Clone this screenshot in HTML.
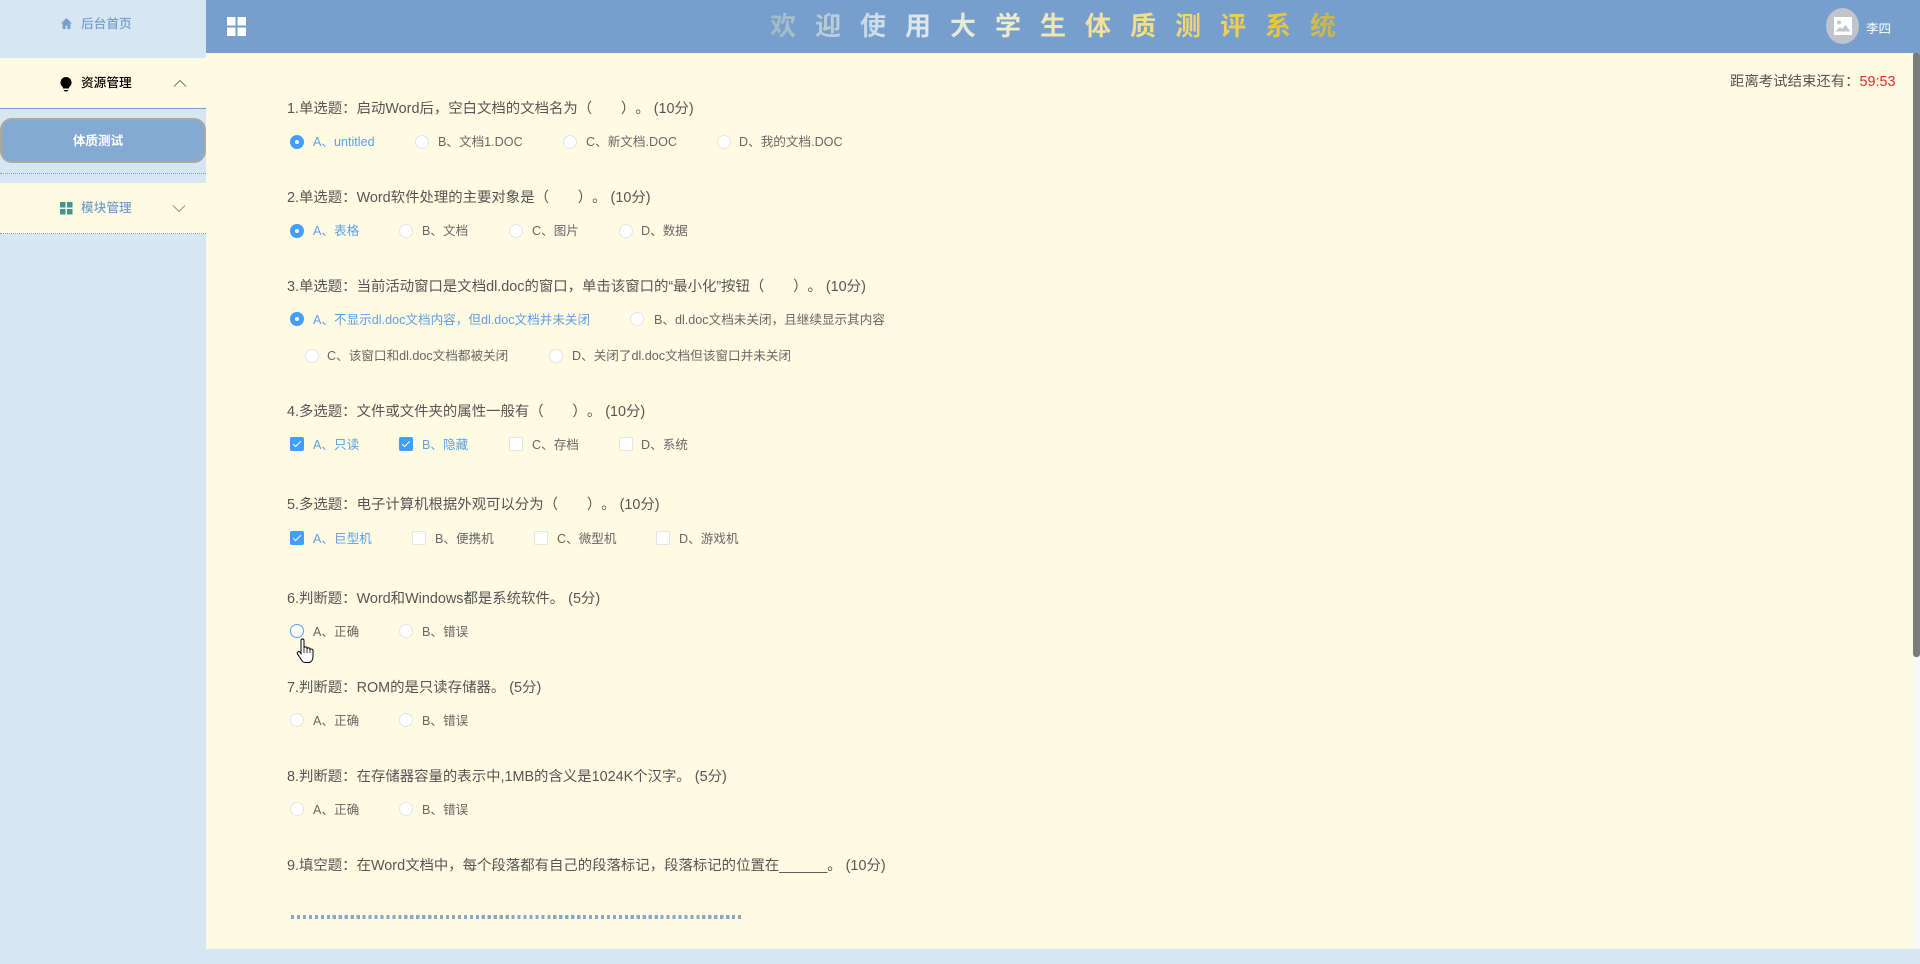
<!DOCTYPE html>
<html lang="zh">
<head>
<meta charset="utf-8">
<title>大学生体质测评系统</title>
<style>
html,body{margin:0;padding:0;width:1920px;height:964px;overflow:hidden;background:#d6e6f2;font-family:"Liberation Sans","Noto Sans CJK SC",sans-serif;text-spacing-trim:space-all}
.a{position:absolute;white-space:nowrap}
.t{position:absolute;left:287px;font-size:14.4px;line-height:20px;margin-top:1px;color:#555;white-space:nowrap}
.l{position:absolute;font-size:12.6px;line-height:20px;margin-top:1px;color:#666;white-space:nowrap}
.l.on{color:#5b9fe8}
.r{position:absolute;width:12px;height:12px;border:1px solid #e2e4ea;border-radius:50%;background:#fff}
.r.on{background:#409eff;border-color:#409eff}
.r.on:after{content:"";position:absolute;left:4px;top:4px;width:4px;height:4px;background:#fff;border-radius:50%}
.r.h{border-color:#5b9fe8}
.c{position:absolute;width:12px;height:12px;border:1px solid #e2e4ea;border-radius:2px;background:#fff}
.c.on{background:#409eff;border-color:#409eff}
.c.on:after{content:"";position:absolute;left:4px;top:1px;width:3px;height:7px;border:solid #fff;border-width:0 1px 1px 0;transform:rotate(45deg)}
.m{position:absolute;left:81px;font-size:12.7px;line-height:20px;white-space:nowrap;font-weight:500}
</style>
</head>
<body>
<!-- sidebar -->
<div class="a" style="left:0;top:0;width:206px;height:964px;background:#d6e6f2"></div>
<svg class="a" style="left:60px;top:17px" width="13" height="13" viewBox="0 0 13 13"><path d="M6.5 1L1 6.5h1.6V12h3V8.5h1.8V12h3V6.5H12z" fill="#769fcd"/></svg>
<div class="m" style="top:14px;color:#769fcd">后台首页</div>

<div class="a" style="left:0;top:58px;width:206px;height:50px;background:#fffbe3;border-bottom:1px solid #769fcd"></div>
<svg class="a" style="left:59px;top:76px" width="14" height="16" viewBox="0 0 14 16"><path d="M7 1a5.6 5.6 0 0 0-3 10.3V12.500h6v-1.200A5.600 5.600 0 0 0 7 1zM4.800 14h4.400v.8L7.800 15.500H6.200L4.800 14.800z" fill="#000"/></svg>
<div class="m" style="top:73px;color:#000">资源管理</div>
<svg class="a" style="left:173px;top:79px" width="14" height="9" viewBox="0 0 14 9"><path d="M1 7.500L7 1.500l6 6" fill="none" stroke="#6d7a70" stroke-width="1"/></svg>

<div class="a" style="left:0;top:118px;width:192px;height:41px;padding-right:10px;border:2px solid #aaa99a;border-radius:12px;background:#84a9d2;color:#fff;font-size:12.6px;font-weight:700;line-height:43px;text-align:center">体质测试</div>
<div class="a" style="left:0;top:173px;width:206px;border-top:1px dotted #769fcd"></div>

<div class="a" style="left:0;top:183px;width:206px;height:50px;background:#fffbe3;border-bottom:1px dotted #769fcd"></div>
<svg class="a" style="left:60px;top:202px" width="13" height="13" viewBox="0 0 13 13"><path d="M0 0h5.500v5.500H0zM7 0h5.500v5.500H7zM0 7h5.500v5.500H0zM7 7h5.500v5.500H7z" fill="#3d9692"/></svg>
<div class="m" style="top:198px;color:#769fcd">模块管理</div>
<svg class="a" style="left:172px;top:204px" width="14" height="9" viewBox="0 0 14 9"><path d="M1 1.500l6 6 6-6" fill="none" stroke="#7f9a94" stroke-width="1"/></svg>

<!-- content -->
<div class="a" style="left:206px;top:52px;width:1707px;height:897px;background:#fffbe3"></div>
<div class="a" style="left:1913px;top:52px;width:7px;height:897px;background:#f8f8f8"></div>
<div class="a" style="left:1913px;top:52px;width:7px;height:605px;background:#7b7b7b;border-radius:3px"></div>

<!-- header -->
<div class="a" style="left:206px;top:0;width:1714px;height:53px;background:#769fcd"></div>
<svg class="a" style="left:227px;top:17px" width="19" height="19" viewBox="0 0 19 19"><path d="M0 0h8.500v8.500H0zM10.500 0H19v8.500h-8.500zM0 10.500h8.500V19H0zM10.500 10.500H19V19h-8.500z" fill="#fff"/></svg>
<div class="a" style="left:770px;top:8px;font-size:26px;line-height:36px;font-weight:700;letter-spacing:19px;background:linear-gradient(90deg,#9fb9c6 0%,#d7e6f0 22%,#f0ecc8 40%,#f5dc80 65%,#eec63c 85%,#b5ad5e 100%);-webkit-background-clip:text;background-clip:text;color:transparent;width:590px">欢迎使用大学生体质测评系统</div>
<div class="a" style="left:1826px;top:8px;width:33px;height:36px;border-radius:50%;background:#c0c4cc"></div>
<svg class="a" style="left:1834px;top:17px" width="18" height="18" viewBox="0 0 18 18"><path d="M0 0h18v18H0zM1.500 14.500h15L11.500 8 8 12 6 10zM5 3.500a2 2 0 1 0 .01 0z" fill="#fff" fill-rule="evenodd"/></svg>
<div class="a" style="left:1866px;top:19px;font-size:12.500px;line-height:20px;color:#fff">李四</div>

<div class="a" style="left:1730px;top:72px;font-size:14.4px;line-height:20px;color:#555">距离考试结束还有：<span style="color:#e02a2a">59:53</span></div>

<!-- Q1 -->
<div class="t" style="top:98px">1.单选题：启动Word后，空白文档的文档名为（　　）。 (10分)</div>
<div class="r on" style="left:290px;top:135px"></div><div class="l on" style="left:313px;top:131px">A、untitled</div>
<div class="r" style="left:415px;top:135px"></div><div class="l" style="left:438px;top:131px">B、文档1.DOC</div>
<div class="r" style="left:563px;top:135px"></div><div class="l" style="left:586px;top:131px">C、新文档.DOC</div>
<div class="r" style="left:717px;top:135px"></div><div class="l" style="left:739px;top:131px">D、我的文档.DOC</div>

<!-- Q2 -->
<div class="t" style="top:187px">2.单选题：Word软件处理的主要对象是（　　）。 (10分)</div>
<div class="r on" style="left:290px;top:224px"></div><div class="l on" style="left:313px;top:220px">A、表格</div>
<div class="r" style="left:399px;top:224px"></div><div class="l" style="left:422px;top:220px">B、文档</div>
<div class="r" style="left:509px;top:224px"></div><div class="l" style="left:532px;top:220px">C、图片</div>
<div class="r" style="left:619px;top:224px"></div><div class="l" style="left:641px;top:220px">D、数据</div>

<!-- Q3 -->
<div class="t" style="top:276px">3.单选题：当前活动窗口是文档dl.doc的窗口，单击该窗口的“最小化”按钮（　　）。 (10分)</div>
<div class="r on" style="left:290px;top:312px"></div><div class="l on" style="left:313px;top:309px">A、不显示dl.doc文档内容，但dl.doc文档并未关闭</div>
<div class="r" style="left:630px;top:312px"></div><div class="l" style="left:654px;top:309px">B、dl.doc文档未关闭，且继续显示其内容</div>
<div class="r" style="left:305px;top:349px"></div><div class="l" style="left:327px;top:345px">C、该窗口和dl.doc文档都被关闭</div>
<div class="r" style="left:549px;top:349px"></div><div class="l" style="left:572px;top:345px">D、关闭了dl.doc文档但该窗口并未关闭</div>

<!-- Q4 -->
<div class="t" style="top:401px">4.多选题：文件或文件夹的属性一般有（　　）。 (10分)</div>
<div class="c on" style="left:290px;top:437px"></div><div class="l on" style="left:313px;top:434px">A、只读</div>
<div class="c on" style="left:399px;top:437px"></div><div class="l on" style="left:422px;top:434px">B、隐藏</div>
<div class="c" style="left:509px;top:437px"></div><div class="l" style="left:532px;top:434px">C、存档</div>
<div class="c" style="left:619px;top:437px"></div><div class="l" style="left:641px;top:434px">D、系统</div>

<!-- Q5 -->
<div class="t" style="top:494px">5.多选题：电子计算机根据外观可以分为（　　）。 (10分)</div>
<div class="c on" style="left:290px;top:531px"></div><div class="l on" style="left:313px;top:528px">A、巨型机</div>
<div class="c" style="left:412px;top:531px"></div><div class="l" style="left:435px;top:528px">B、便携机</div>
<div class="c" style="left:534px;top:531px"></div><div class="l" style="left:557px;top:528px">C、微型机</div>
<div class="c" style="left:656px;top:531px"></div><div class="l" style="left:679px;top:528px">D、游戏机</div>

<!-- Q6 -->
<div class="t" style="top:588px">6.判断题：Word和Windows都是系统软件。 (5分)</div>
<div class="r h" style="left:290px;top:624px"></div><div class="l" style="left:313px;top:621px">A、正确</div>
<div class="r" style="left:399px;top:624px"></div><div class="l" style="left:422px;top:621px">B、错误</div>

<!-- Q7 -->
<div class="t" style="top:677px">7.判断题：ROM的是只读存储器。 (5分)</div>
<div class="r" style="left:290px;top:713px"></div><div class="l" style="left:313px;top:710px">A、正确</div>
<div class="r" style="left:399px;top:713px"></div><div class="l" style="left:422px;top:710px">B、错误</div>

<!-- Q8 -->
<div class="t" style="top:766px">8.判断题：在存储器容量的表示中,1MB的含义是1024K个汉字。 (5分)</div>
<div class="r" style="left:290px;top:802px"></div><div class="l" style="left:313px;top:799px">A、正确</div>
<div class="r" style="left:399px;top:802px"></div><div class="l" style="left:422px;top:799px">B、错误</div>

<!-- Q9 -->
<div class="t" style="top:855px">9.填空题：在Word文档中，每个段落都有自己的段落标记，段落标记的位置在______。 (10分)</div>
<div class="a" style="left:291px;top:915px;width:451px;height:4px;background:repeating-linear-gradient(90deg,#8aa6c6 0,#8aa6c6 3.2px,transparent 3.2px,transparent 5.96px)"></div>

<!-- cursor -->
<svg class="a" style="left:296px;top:638px" width="20" height="26" viewBox="0 0 20 26"><path d="M5 2.500c0-2 3-2 3 0V10c0-1.500 3-1.500 3 0v1c0-1.500 3-1.500 3 0v1c0-1.300 3-1.300 3 .3V19c0 3-2 5.500-4 5.500H9c-2 0-3-1.500-4.500-4L1.500 16c-1-1.800 1.200-3.300 2.500-1.800L5 15.500z" fill="#fff" stroke="#000" stroke-width="1"/><path d="M8 10v5M11 11v4M14 12v3" stroke="#000" stroke-width=".8" fill="none"/></svg>
</body>
</html>
